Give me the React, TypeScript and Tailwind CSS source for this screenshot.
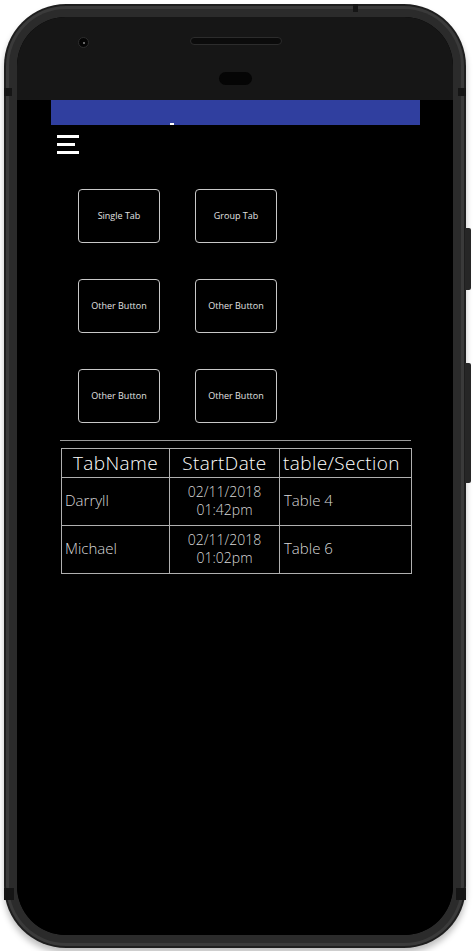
import { Fragment } from 'react'

const font = { fontFamily: '"Open Sans", "Liberation Sans", sans-serif' }

const buttons = ['Single Tab', 'Group Tab', 'Other Button', 'Other Button', 'Other Button', 'Other Button']

const rows = [
  { name: 'Darryll', date: '02/11/2018', time: '01:42pm', table: 'Table 4' },
  { name: 'Michael', date: '02/11/2018', time: '01:02pm', table: 'Table 6' },
]

function Hamburger() {
  return (
    <div className="ml-[30px] mt-[10px] flex flex-col gap-[5px]">
      <span className="block h-[3px] w-[22px] bg-white" />
      <span className="block h-[3px] w-[18px] bg-white" />
      <span className="block h-[3px] w-[22px] bg-white" />
    </div>
  )
}

function Screen() {
  return (
    <div className="flex flex-col bg-black" style={font}>
      <div className="relative ml-[24px] mr-[26px] h-[25px] bg-[#303f9f]">
        <span className="absolute bottom-0 left-[119px] h-[2px] w-[4px] bg-white" />
      </div>
      <Hamburger />

      <div className="ml-[51px] mt-[35px] grid grid-cols-[82px_82px] gap-x-[35px] gap-y-[36px]">
        {buttons.map((label, i) => (
          <button
            key={i}
            className="flex h-[54px] items-center justify-center rounded-[4px] border border-[#c8c8c8] text-[9px] text-[#e2e2e2]"
          >
            {label}
          </button>
        ))}
      </div>

      <div className="ml-[33px] mt-[17px] h-px w-[351px] bg-[#9a9a9a]" />

      <table className="ml-[34px] mt-[7px] w-[351px] table-fixed border-collapse text-white">
        <colgroup>
          <col className="w-[108px]" />
          <col className="w-[110px]" />
          <col />
        </colgroup>
        <thead>
          <tr className="h-[29px] text-[19px] tracking-[0.4px]">
            <th className="border border-[#b0b0b0] p-0 text-center font-light leading-none">TabName</th>
            <th className="border border-[#b0b0b0] p-0 text-center font-light leading-none">StartDate</th>
            <th className="whitespace-nowrap border border-[#b0b0b0] pl-[3px] text-left font-light leading-none">table/Section</th>
          </tr>
        </thead>
        <tbody className="text-[15px] font-light text-[#d8d8d8]">
          {rows.map((r) => (
            <Fragment key={r.name}>
              <tr className="h-[48px]">
                <td className="border border-[#b0b0b0] pb-[3px] pl-[3px]">{r.name}</td>
                <td className="border border-[#b0b0b0] pb-[2px] text-center text-[14px]">
                  <span className="block leading-[18px]">{r.date}</span>
                  <span className="block leading-[18px]">{r.time}</span>
                </td>
                <td className="border border-[#b0b0b0] pb-[3px] pl-[4px]">{r.table}</td>
              </tr>
            </Fragment>
          ))}
        </tbody>
      </table>
    </div>
  )
}

export default function App() {
  return (
    <div className="h-[951px] w-[474px] bg-white p-[4px]">
      <div className="relative w-[462px] rounded-[62px] bg-[#1e1e1e] p-[2px] shadow-[0_5px_6px_rgba(0,0,0,0.25)]">
        {/* side keys */}
        <span className="absolute -right-[5px] top-[224px] h-[62px] w-[6px] rounded-r-[2px] bg-[#262626]" />
        <span className="absolute -right-[5px] top-[359px] h-[120px] w-[6px] rounded-r-[2px] bg-[#262626]" />
        {/* antenna lines */}
        <span className="absolute left-[349px] top-0 h-[8px] w-[5px] bg-[#151515]" />
        <span className="absolute left-0 top-[84px] h-[8px] w-[8px] bg-[#151515]" />
        <span className="absolute right-0 top-[84px] h-[8px] w-[8px] bg-[#151515]" />
        <span className="absolute bottom-[48px] left-0 h-[12px] w-[10px] bg-[#151515]" />
        <span className="absolute bottom-[48px] right-0 h-[12px] w-[10px] bg-[#151515]" />

        <div className="rounded-[60px] bg-[#3a3a3a] p-[3px]">
          <div className="rounded-[57px] bg-[#2b2b2b] p-[8px]">
            <div className="flex h-[918px] flex-col overflow-hidden rounded-[49px] bg-black">
              <div className="relative h-[83px] shrink-0 bg-[#161616]">
                <span className="absolute left-[61px] top-[20px] h-[11px] w-[11px] rounded-full border border-[#2e2e2e] bg-[#050505]">
                  <span className="absolute left-[4px] top-[4px] h-[2px] w-[2px] rounded-full bg-[#888]" />
                </span>
                <div className="flex flex-col items-center pt-[20px]">
                  <span className="ml-[1px] h-[8px] w-[92px] rounded-full border border-[#2c2c2c] bg-[#0b0b0b]" />
                  <span className="mt-[27px] h-[13px] w-[33px] rounded-full bg-[#050505]" />
                </div>
              </div>
              <div className="flex flex-1 bg-black">
                <div className="w-[10px] shrink-0" />
                <div className="w-[419px] shrink-0">
                  <Screen />
                </div>
                <div className="flex-1" />
              </div>
            </div>
          </div>
        </div>
      </div>
    </div>
  )
}
